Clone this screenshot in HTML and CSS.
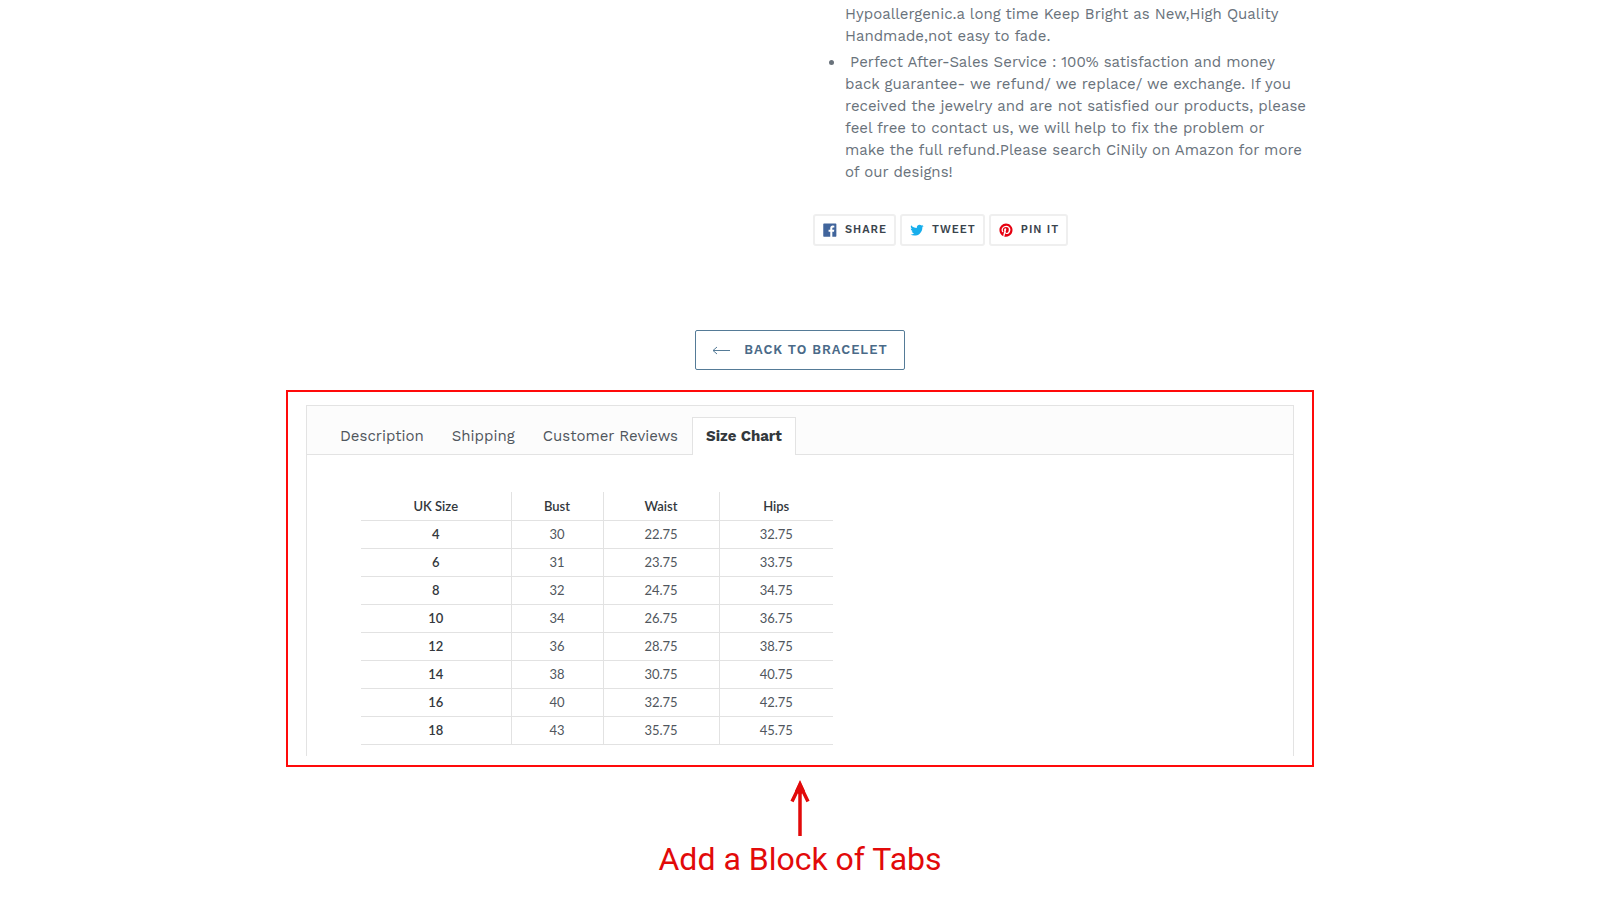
FILE: index.html
```
<!DOCTYPE html>
<html lang="en">

<head>
    <meta charset="utf-8">
    <title>Bracelet</title>
    <link rel="stylesheet" href="styles.css">
</head>

<body>
    <main class="page">
        <section class="product">
            <div class="description">
                <ul>
                    <li>
                        polished platinum superior metal with durable shine,<br>
                        Hypoallergenic.a long time Keep Bright as New,High Quality<br>
                        Handmade,not easy to fade.
                    </li>
                    <li>
                        &nbsp;Perfect After-Sales Service : 100% satisfaction and money<br>
                        back guarantee- we refund/ we replace/ we exchange. If you<br>
                        received the jewelry and are not satisfied our products, please<br>
                        feel free to contact us, we will help to fix the problem or<br>
                        make the full refund.Please search CiNily on Amazon for more<br>
                        of our designs!
                    </li>
                </ul>
            </div>
            <div class="share">
                <a class="share-btn" href="#">
                    <svg width="14" height="14" viewBox="0 0 20 20">
                        <path fill="#41659c" d="M18.05.811q.439 0 .744.305t.305.744v16.637q0 .439-.305.744t-.744.305h-4.732v-7.221h2.415l.342-2.854h-2.757v-1.83q0-.659.293-1t1.073-.342h1.488V3.762q-.976-.098-2.171-.098-1.634 0-2.635.964t-1 2.72V9.47H7.951v2.854h2.415v7.221H1.413q-.439 0-.744-.305t-.305-.744V1.859q0-.439.305-.744T1.413.81H18.05z" />
                    </svg>
                    <span>SHARE</span>
                </a>
                <a class="share-btn" href="#">
                    <svg width="14" height="14" viewBox="0 0 20 20">
                        <path fill="#17aeec" d="M19.551 4.208q-.815 1.202-1.956 2.038 0 .082.02.255t.02.255q0 1.589-.469 3.179t-1.426 3.036-2.272 2.567-3.158 1.793-3.963.672q-3.301 0-6.031-1.773.571.041.937.041 2.751 0 4.911-1.671-1.284-.02-2.292-.784T2.456 11.85q.346.082.754.082.55 0 1.039-.163-1.365-.285-2.262-1.365T1.09 7.918v-.041q.774.408 1.773.448-.795-.53-1.263-1.396t-.469-1.864q0-1.019.509-1.997 1.487 1.854 3.596 2.924T9.81 7.184q-.143-.509-.143-.897 0-1.63 1.161-2.781t2.832-1.151q.815 0 1.569.326t1.284.917q1.345-.265 2.506-.958-.428 1.386-1.732 2.18 1.243-.163 2.262-.611z" />
                    </svg>
                    <span>TWEET</span>
                </a>
                <a class="share-btn" href="#">
                    <svg width="14" height="14" viewBox="0 0 20 20">
                        <path fill="#e60010" d="M9.958.811q1.903 0 3.635.744t2.988 2 2 2.988.744 3.635q0 2.537-1.256 4.696t-3.415 3.415-4.696 1.256q-1.39 0-2.659-.366.707-1.147.951-2.025l.659-2.561q.244.463.903.817t1.39.354q1.464 0 2.622-.842t1.793-2.305.634-3.293q0-2.171-1.671-3.769t-4.257-1.598q-1.586 0-2.903.537T5.298 5.897 4.066 7.775t-.427 2.037q0 1.268.476 2.22t1.427 1.342q.171.073.293.012t.171-.232q.171-.61.195-.756.098-.268-.122-.512-.634-.707-.634-1.83 0-1.854 1.281-3.183t3.354-1.329q1.83 0 2.854 1t1.025 2.61q0 1.342-.366 2.476t-1.049 1.817-1.561.683q-.732 0-1.195-.537t-.293-1.269q.098-.342.256-.878t.268-.915.207-.817.098-.732q0-.61-.317-1t-.927-.39q-.756 0-1.269.695t-.512 1.744q0 .39.061.756t.134.537l.073.171q-1 4.342-1.22 5.098-.195.927-.146 2.171-2.513-1.122-4.062-3.44T.59 10.177q0-3.879 2.744-6.623T9.957.81z" />
                    </svg>
                    <span>PIN IT</span>
                </a>
            </div>
        </section>

        <a class="back-btn" href="#">
            <svg width="18" height="10" viewBox="0 0 18 10" fill="none" stroke="#557b97">
                <path d="M1 5.500h17M5 2L1 5.500l4 3.500" />
            </svg>
            <span>BACK TO BRACELET</span>
        </a>

        <section class="highlight">
            <div class="tabs">
                <div class="tab-list" role="tablist">
                    <button class="tab" role="tab">Description</button>
                    <button class="tab" role="tab">Shipping</button>
                    <button class="tab" role="tab">Customer Reviews</button>
                    <button class="tab active" role="tab" aria-selected="true">Size Chart</button>
                </div>
                <div class="tab-panel" role="tabpanel">
                    <table class="size-table">
                        <thead>
                            <tr><th class="col-size">UK Size</th><th class="col-bust">Bust</th><th class="col-waist">Waist</th><th class="col-hips">Hips</th></tr>
                        </thead>
                        <tbody>
                            <tr><th>4</th><td>30</td><td>22.75</td><td>32.75</td></tr>
                            <tr><th>6</th><td>31</td><td>23.75</td><td>33.75</td></tr>
                            <tr><th>8</th><td>32</td><td>24.75</td><td>34.75</td></tr>
                            <tr><th>10</th><td>34</td><td>26.75</td><td>36.75</td></tr>
                            <tr><th>12</th><td>36</td><td>28.75</td><td>38.75</td></tr>
                            <tr><th>14</th><td>38</td><td>30.75</td><td>40.75</td></tr>
                            <tr><th>16</th><td>40</td><td>32.75</td><td>42.75</td></tr>
                            <tr><th>18</th><td>43</td><td>35.75</td><td>45.75</td></tr>
                        </tbody>
                    </table>
                </div>
            </div>
        </section>

        <div class="note">
            <svg width="20" height="56" viewBox="0 0 20 56" fill="none" stroke="#e20a0a">
                <path stroke-width="3.500" d="M10 56V6" />
                <path stroke-width="3.500" d="M2 21.500L10 5l8 16.500" />
                <path fill="#e20a0a" stroke="none" d="M10 0l5 11-5 4-5-4z" />
            </svg>
            <p>Add a Block of Tabs</p>
        </div>
    </main>
</body>

</html>
```
FILE: styles.css
```
* {
    box-sizing: border-box;
}

body {
    margin: 0;
    background: #fff;
    color: #69727b;
    font-family: "Work Sans", Inter, "Noto Sans", sans-serif;
    font-size: 15px;
    line-height: 22px;
}

.page {
    max-width: 1028px;
    margin: 0 auto;
    display: flex;
    flex-direction: column;
    align-items: center;
}

.product {
    width: 100%;
    padding-left: 527px;
}

/* long text, only its end is in view */
.description {
    height: 187px;
    display: flex;
    flex-direction: column;
    justify-content: flex-end;
    overflow: hidden;
}

.description ul {
    margin: 0;
    padding-left: 32px;
    white-space: nowrap;
}

.description li {
    margin-bottom: 4px;
}

.share {
    display: flex;
    gap: 4px;
    margin-top: 27px;
}

.share-btn {
    display: flex;
    align-items: center;
    gap: 8px;
    height: 32px;
    padding: 0 7px 0 8px;
    border: 2px solid #efefef;
    border-radius: 3px;
    color: #3a444d;
    font-size: 11px;
    font-weight: 600;
    letter-spacing: 1px;
    text-decoration: none;
}

.back-btn {
    display: flex;
    align-items: center;
    gap: 14px;
    height: 40px;
    margin-top: 84px;
    padding: 0 16px;
    border: 1px solid #557b97;
    border-radius: 2px;
    color: #4a6a88;
    font-size: 13px;
    font-weight: 600;
    letter-spacing: 1px;
    text-decoration: none;
}

.highlight {
    width: 100%;
    margin-top: 20px;
    padding: 13px 18px 9px;
    border: 2px solid #ff0a0a;
}

.tabs {
    border: 1px solid #e3e3e3;
    border-bottom: none;
}

.tab-list {
    display: flex;
    height: 49px;
    padding: 11px 19px 0;
    border-bottom: 1px solid #e3e3e3;
    background: #fcfcfc;
}

.tab {
    height: 38px;
    padding: 0 13px 2px;
    border: 1px solid transparent;
    border-bottom: none;
    background: none;
    color: #50565d;
    font: inherit;
}

.tab.active {
    border-color: #e3e3e3;
    background: #fff;
    color: #33383d;
    font-weight: 700;
}

.tab-panel {
    padding: 37px 54px 11px;
}

.size-table {
    border-collapse: collapse;
    color: #50565d;
    font-family: Lato, sans-serif;
    font-size: 13px;
    line-height: 20px;
    text-align: center;
}

.size-table th,
.size-table td {
    height: 28px;
    padding: 0;
    border-bottom: 1px solid #e2e2e2;
    border-right: 1px solid #e2e2e2;
}

.size-table th {
    color: #33383d;
    font-weight: 600;
}

.size-table tr > :last-child {
    border-right: none;
}

.col-size {
    width: 150px;
}

.col-bust {
    width: 92px;
}

.col-waist {
    width: 116px;
}

.col-hips {
    width: 114px;
}

.note {
    display: flex;
    flex-direction: column;
    align-items: center;
    margin-top: 13px;
    color: #e20a0a;
    font-family: Roboto, sans-serif;
    font-size: 32px;
    line-height: 40px;
}

.note p {
    margin: 3px 0 0;
}
```
